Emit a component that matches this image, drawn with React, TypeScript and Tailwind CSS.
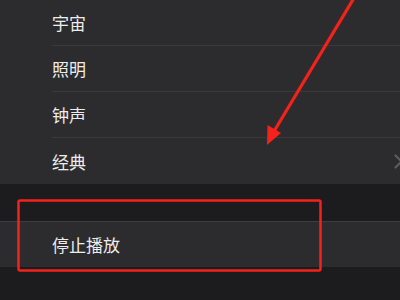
import React from 'react';

const items = ['宇宙', '照明', '钟声', '经典'];

const Chevron: React.FC = () => (
  <svg width="9" height="15" viewBox="0 0 9 15" className="shrink-0">
    <path d="M1.5 1.5 L7.5 7.5 L1.5 13.5" fill="none" stroke="#5c5c60" strokeWidth="2.2" strokeLinecap="round" strokeLinejoin="round" />
  </svg>
);

const App: React.FC = () => {
  return (
    <div
      className="relative w-[400px] h-[300px] overflow-hidden bg-[#1c1c1e]"
      style={{ fontFamily: '"Noto Sans CJK SC", "Noto Sans", sans-serif' }}
    >
      {/* Sound list */}
      <div className="bg-[#2c2c2e]">
        {items.map((item, i) => (
          <div key={item} className="flex pl-[52px]">
            <div
              className={`flex flex-1 items-center justify-between h-[46px] mr-[-3px] ${
                i < items.length - 1 ? 'border-b border-[#3a3a3c]' : ''
              }`}
            >
              <span className="text-[17px] leading-none text-[#ededed]">{item}</span>
              {i === items.length - 1 && <Chevron />}
            </div>
          </div>
        ))}
      </div>

      {/* Stop playing */}
      <div className="mt-[37px] border-t border-[#3d3d40] bg-[#2c2c2e]">
        <div className="flex items-center h-[45px] pl-[52px]">
          <span className="text-[17px] leading-none text-[#ededed]">停止播放</span>
        </div>
      </div>

      {/* Annotation overlay */}
      <svg className="absolute inset-0 pointer-events-none" width="400" height="300" viewBox="0 0 400 300">
        <rect x="18.5" y="200.5" width="302" height="70" rx="1.5" fill="none" stroke="#f5221b" strokeWidth="2.5" />
        <line x1="354" y1="-2" x2="273" y2="133" stroke="#f5221b" strokeWidth="3.2" />
        <polygon points="267,145 267.5,125 281,133" fill="#f5221b" />
      </svg>
    </div>
  );
};

export default App;
